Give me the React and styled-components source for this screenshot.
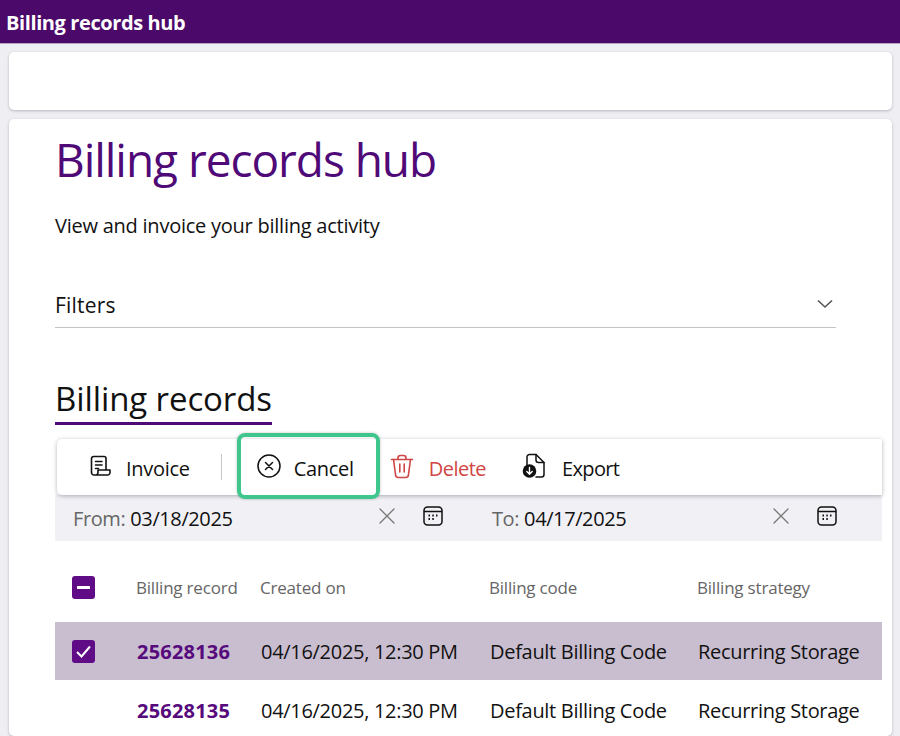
import React from 'react'
import styled, { createGlobalStyle } from 'styled-components'

const GlobalStyle = createGlobalStyle`
  html, body {
    margin: 0;
    height: 100%;
    overflow: hidden;
    background: #eeeef3;
    font-family: "Open Sans", "Noto Sans", sans-serif;
    color: #111;
  }
  * { box-sizing: border-box; }
`

const Page = styled.div`
  width: 900px;
  height: 736px;
  overflow: hidden;
  display: flex;
  flex-direction: column;
`

const TopBar = styled.header`
  flex: none;
  height: 44px;
  padding: 2px 6px 0;
  display: flex;
  align-items: center;
  background: #4b0a69;
  border-bottom: 1px solid #b9a3c6;
  color: #fff;
  font-size: 20px;
  font-weight: 700;
  letter-spacing: -0.4px;
`

const Panels = styled.div`
  flex: 1;
  min-height: 0;
  display: flex;
  flex-direction: column;
  gap: 9px;
  padding: 8px 8px 0 9px;
`

const Card = styled.section`
  background: #fff;
  border-radius: 5px;
  box-shadow: 0 1px 3px rgba(40, 40, 60, 0.28);
`

const EmptyCard = styled(Card)`
  flex: none;
  height: 58px;
`

const MainCard = styled(Card)`
  flex: 1;
  min-height: 0;
  overflow: hidden;
  padding: 9px 10px 0 46px;
`

const Title = styled.h1`
  margin: 0;
  font-size: 46px;
  line-height: 62px;
  font-weight: 400;
  color: #4f0a78;
  letter-spacing: -1.05px;
`

const Subtitle = styled.p`
  margin: 22px 0 0;
  font-size: 20px;
  line-height: 28px;
  letter-spacing: -0.24px;
`

const FilterRow = styled.div`
  width: 781px;
  height: 50px;
  margin-top: 38px;
  padding: 0 3px 8px 0;
  display: flex;
  align-items: flex-end;
  justify-content: space-between;
  border-bottom: 1px solid #c4c4c4;
  font-size: 21px;
  line-height: 28px;
  letter-spacing: 0.2px;
  svg { margin-bottom: 10px; }
`

const SectionTitle = styled.h2`
  display: inline-block;
  margin: 48px 0 0;
  height: 68px;
  font-size: 33px;
  line-height: 45px;
  font-weight: 400;
  letter-spacing: -0.1px;
  color: #111;
  position: relative;
  &::after {
    content: '';
    position: absolute;
    left: 0;
    right: 0;
    top: 46px;
    height: 3px;
    background: #4f0a78;
  }
`

const Toolbar = styled.div`
  width: 825px;
  height: 56px;
  margin: -5px 0 0 2px;
  display: flex;
  align-items: center;
  padding-left: 31px;
  background: #fff;
  border-radius: 5px 0 0 5px;
  box-shadow: 0 1px 4px rgba(40, 40, 60, 0.35);
  position: relative;
  z-index: 1;
`

const Action = styled.div`
  display: flex;
  align-items: center;
  gap: ${p => p.$gap || 15}px;
  margin-right: ${p => p.$after || 0}px;
  font-size: 20px;
  letter-spacing: ${p => p.$track || -0.3}px;
  color: ${p => (p.$danger ? '#d04545' : '#111')};
  position: relative;
  top: 1px;
  svg { flex: none; position: relative; top: -2px; }
`

const Highlighted = styled(Action)`
  &::after {
    content: '';
    position: absolute;
    left: -20px;
    right: -26px;
    top: -22px;
    bottom: -17px;
    border: 4px solid #3fc68d;
    border-radius: 8px;
    box-shadow: 0 0 3px rgba(0, 0, 0, 0.25);
  }
`

const Divider = styled.span`
  width: 1px;
  height: 26px;
  background: #c8c8c8;
  margin: 0 35px 0 31px;
`

const DateBar = styled.div`
  width: 827px;
  height: 46px;
  display: grid;
  grid-template-columns: 437px 390px;
  align-items: center;
  background: #f0f0f5;
`

const DateField = styled.div`
  display: flex;
  align-items: center;
  padding-left: ${p => p.$left}px;
  font-size: 20px;
  letter-spacing: -0.4px;
`

const DateLabel = styled.span`
  color: #666;
  margin-right: 5px;
`

const DateIcons = styled.span`
  margin-left: auto;
  display: flex;
  align-items: center;
  gap: 28px;
  padding-right: ${p => p.$right}px;
  position: relative;
  top: -2px;
`

const Table = styled.div`
  width: 827px;
  margin-top: 13px;
`

const Row = styled.div`
  height: ${p => p.$height}px;
  display: grid;
  grid-template-columns: 81px 124px 229px 208px 1fr;
  align-items: center;
  background: ${p => (p.$selected ? '#c9bdd0' : 'transparent')};
`

const HeaderRow = styled(Row)`
  padding-bottom: 2px;
  color: #666;
  font-size: 17px;
  letter-spacing: -0.2px;
`

const BodyRow = styled(Row)`
  font-size: 20px;
  letter-spacing: -0.3px;
  margin-bottom: ${p => p.$after || 0}px;
`

const CheckCell = styled.div`
  padding-left: 17px;
`

const Check = styled.span`
  width: 23px;
  height: 23px;
  display: flex;
  align-items: center;
  justify-content: center;
  background: #5f0c86;
  border-radius: 3px;
`

const RecordId = styled.a`
  font-weight: 700;
  color: #560a7c;
  padding-left: 1px;
  letter-spacing: 0.2px;
`

const Value = styled.span`
  padding-left: 1px;
  white-space: nowrap;
`

const InvoiceIcon = () => (
  <svg width="24" height="24" viewBox="0 0 24 24" fill="none" stroke="#111" strokeWidth="1.6" strokeLinecap="round" strokeLinejoin="round">
    <path d="M18 16V4.5A2 2 0 0 0 16 2.5H5.5A2 2 0 0 0 3.5 4.5V18.5A2.5 2.5 0 0 0 6 21H19.5A2.5 2.5 0 0 0 22 18.5V16H10V18.5A2.5 2.5 0 0 1 7.5 21" />
    <path d="M7.5 7.5H14M7.5 11H14M7.5 14.5H10.5" />
  </svg>
)

const CancelIcon = () => (
  <svg width="24" height="24" viewBox="0 0 24 24" fill="none" stroke="#111" strokeWidth="1.5" strokeLinecap="round">
    <circle cx="12" cy="12" r="11" />
    <path d="M8.5 8.5L15.5 15.5M15.5 8.5L8.5 15.5" />
  </svg>
)

const TrashIcon = () => (
  <svg width="24" height="25" viewBox="0 0 24 25" fill="none" stroke="#d04545" strokeWidth="1.6" strokeLinecap="round" strokeLinejoin="round">
    <path d="M1.5 5.5H22.5M8 5.5V4A2.5 2.5 0 0 1 10.5 1.5H13.5A2.5 2.5 0 0 1 16 4V5.5" />
    <path d="M3.5 5.5L5.5 20.5A3 3 0 0 0 8.5 23.5H15.5A3 3 0 0 0 18.5 20.5L20.5 5.5" />
    <path d="M9.8 10V18M14.2 10V18" />
  </svg>
)

const ExportIcon = () => (
  <svg width="24" height="26" viewBox="0 0 24 26" fill="none" stroke="#111" strokeWidth="1.5" strokeLinecap="round" strokeLinejoin="round">
    <path d="M5 12V4A2.5 2.5 0 0 1 7.5 1.5H14L22 9.5V21.5A2.5 2.5 0 0 1 19.5 24H14" />
    <path d="M14 1.5V7A2.5 2.5 0 0 0 16.5 9.5H22" />
    <circle cx="7.5" cy="18" r="6.8" fill="#111" stroke="none" />
    <path d="M7.5 14.5V21M4.8 18.5L7.5 21.2L10.2 18.5" stroke="#fff" strokeWidth="1.4" />
  </svg>
)

const ClearIcon = () => (
  <svg width="16" height="16" viewBox="0 0 16 16" fill="none" stroke="#777" strokeWidth="1.3" strokeLinecap="round">
    <path d="M1 1L15 15M15 1L1 15" />
  </svg>
)

const CalendarIcon = () => (
  <svg width="20" height="20" viewBox="0 0 20 20" fill="none" stroke="#111" strokeWidth="1.5">
    <rect x="1" y="1" width="18" height="18" rx="3.5" />
    <path d="M1 5.5H19" />
    <path d="M5.5 9.5H7M9.3 9.5H10.8M13 9.5H14.5M5.5 13H7M9.3 13H10.8" strokeWidth="2" />
  </svg>
)

const ChevronIcon = () => (
  <svg width="16" height="10" viewBox="0 0 16 10" fill="none" stroke="#555" strokeWidth="1.6">
    <path d="M1 1.5L8 8L15 1.5" />
  </svg>
)

const records = [
  { id: '25628136', selected: true, after: 1 },
  { id: '25628135' },
]

function App() {
  return (
    <Page>
      <GlobalStyle />
      <TopBar>Billing records hub</TopBar>
      <Panels>
        <EmptyCard />
        <MainCard>
          <Title>Billing records hub</Title>
          <Subtitle>View and invoice your billing activity</Subtitle>
          <FilterRow>
            Filters
            <ChevronIcon />
          </FilterRow>
          <SectionTitle>Billing records</SectionTitle>
          <Toolbar>
            <Action $gap={14}><InvoiceIcon />Invoice</Action>
            <Divider />
            <Highlighted $gap={13} $after={36}><CancelIcon />Cancel</Highlighted>
            <Action $danger $track={-0.5} $after={36}><TrashIcon />Delete</Action>
            <Action $gap={16} $track={-0.65}><ExportIcon />Export</Action>
          </Toolbar>
          <DateBar>
            <DateField $left={18}>
              <DateLabel>From:</DateLabel>03/18/2025
              <DateIcons $right={49}><ClearIcon /><CalendarIcon /></DateIcons>
            </DateField>
            <DateField $left={0}>
              <DateLabel>To:</DateLabel>04/17/2025
              <DateIcons $right={45}><ClearIcon /><CalendarIcon /></DateIcons>
            </DateField>
          </DateBar>
          <Table>
            <HeaderRow $height={68}>
              <CheckCell>
                <Check>
                  <svg width="13" height="3" viewBox="0 0 13 3"><rect width="13" height="3" rx="0.5" fill="#fff" /></svg>
                </Check>
              </CheckCell>
              <span>Billing record</span>
              <span>Created on</span>
              <span>Billing code</span>
              <span>Billing strategy</span>
            </HeaderRow>
            {records.map(r => (
              <BodyRow key={r.id} $height={58} $selected={r.selected} $after={r.after}>
                <CheckCell>
                  {r.selected && (
                    <Check>
                      <svg width="15" height="13" viewBox="0 0 15 13" fill="none" stroke="#fff" strokeWidth="2">
                        <path d="M1 7L5.5 11.5L14 1.5" />
                      </svg>
                    </Check>
                  )}
                </CheckCell>
                <RecordId>{r.id}</RecordId>
                <Value>04/16/2025, 12:30 PM</Value>
                <Value>Default Billing Code</Value>
                <Value>Recurring Storage</Value>
              </BodyRow>
            ))}
          </Table>
        </MainCard>
      </Panels>
    </Page>
  )
}

export default App
